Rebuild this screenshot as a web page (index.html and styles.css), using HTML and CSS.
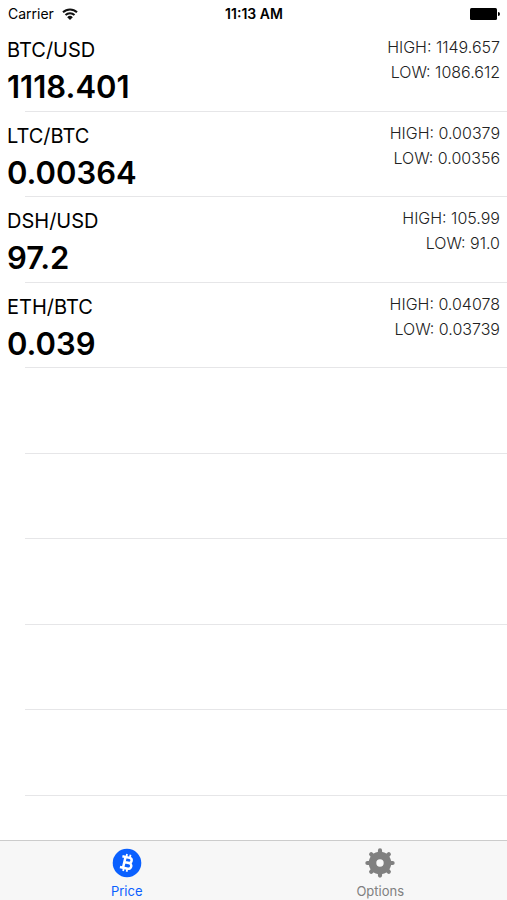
FILE: index.html
```html
<!DOCTYPE html>
<html lang="en">
<head>
	<meta charset="UTF-8">
	<meta name="viewport" content="width=device-width, initial-scale=1">
	<title>Price</title>
	<link rel="stylesheet" href="styles.css">
</head>
<body>

<header class="status">
	<div class="carrier">
		<span>Carrier</span>
		<svg class="wifi" viewBox="0 0 16 12" aria-hidden="true">
			<path d="M1 4.3a10 10 0 0 1 14 0M3.5 7a6.4 6.4 0 0 1 9 0"/>
			<path class="dot" d="M8 12 5.2 9.2a4 4 0 0 1 5.6 0z"/>
		</svg>
	</div>
	<time class="time">11:13 AM</time>
	<svg class="battery" viewBox="0 0 31 12" aria-hidden="true">
		<rect x="1" width="27" height="12" rx="1.5"/>
		<path d="M29 4a2 2 0 0 1 0 4z"/>
	</svg>
</header>

<main>
	<ul class="list">
		<li class="row">
			<div>
				<h2 class="pair">BTC/USD</h2>
				<p class="price">1118.401</p>
			</div>
			<div class="range">
				<p>HIGH: 1149.657</p>
				<p>LOW: 1086.612</p>
			</div>
		</li>
		<li class="row">
			<div>
				<h2 class="pair">LTC/BTC</h2>
				<p class="price">0.00364</p>
			</div>
			<div class="range">
				<p>HIGH: 0.00379</p>
				<p>LOW: 0.00356</p>
			</div>
		</li>
		<li class="row">
			<div>
				<h2 class="pair">DSH/USD</h2>
				<p class="price">97.2</p>
			</div>
			<div class="range">
				<p>HIGH: 105.99</p>
				<p>LOW: 91.0</p>
			</div>
		</li>
		<li class="row">
			<div>
				<h2 class="pair">ETH/BTC</h2>
				<p class="price">0.039</p>
			</div>
			<div class="range">
				<p>HIGH: 0.04078</p>
				<p>LOW: 0.03739</p>
			</div>
		</li>
		<!-- empty rows -->
		<li class="row"></li>
		<li class="row"></li>
		<li class="row"></li>
		<li class="row"></li>
		<li class="row"></li>
	</ul>
</main>

<nav class="tabs">
	<a class="tab active" href="#price" aria-current="page">
		<svg class="icon" viewBox="0 0 30 30" aria-hidden="true">
			<circle cx="15" cy="15" r="14.3" fill="currentColor"/>
			<g transform="rotate(13 15 15)" fill="none" stroke="#fff" stroke-width="2.5">
				<path d="M9 9.4h7.4a2.6 2.6 0 0 1 0 5.2h-4M12.2 14.6h4.8a2.9 2.9 0 0 1 0 5.8H9M12.2 9.4v11"/>
				<path d="M13 6.2v3M16.6 6.2v3M13 20.6v3M16.6 20.6v3" stroke-width="1.8"/>
			</g>
		</svg>
		<span>Price</span>
	</a>
	<a class="tab" href="#options">
		<svg class="icon" viewBox="0 0 30 30" aria-hidden="true">
			<g fill="none" stroke="currentColor">
				<circle cx="15" cy="15" r="7.5" stroke-width="7.6"/>
				<path d="M15 2.4v4M15 23.6v4M2.4 15h4M23.6 15h4M6.2 6.2l3 3M20.8 20.8l3 3M23.8 6.2l-3 3M9.2 20.8l-3 3" stroke-width="4.2" stroke-linecap="round"/>
			</g>
		</svg>
		<span>Options</span>
	</a>
</nav>

</body>
</html>
```
FILE: styles.css
```css
* {box-sizing: border-box;}

body {
	display: flex;
	flex-direction: column;
	min-height: 100vh;
	margin: 0;
	background: #fff;
	color: #000;
	font: normal 400 16px/25px Inter, "Liberation Sans", sans-serif;}

h2, p, ul {
	margin: 0;
	padding: 0;}

/* status bar */
.status {
	display: grid;
	grid-template-columns: 1fr auto 1fr;
	align-items: center;
	height: 26px;
	padding: 2px 7px 0 8px;
	font-size: 14px;
	line-height: 24px;}

.carrier {
	display: flex;
	align-items: center;
	gap: 8px;}

.wifi {
	width: 16px;
	height: 12px;
	fill: none;
	stroke: #111;
	stroke-width: 2;}
.wifi .dot {fill: #111; stroke: none;}

.time {font-weight: 600;}

.battery {
	width: 31px;
	height: 12px;
	justify-self: end;}

/* price list */
main {
	display: flex;
	flex: 1;}

.list {
	display: grid;
	flex: 1;
	grid-template-rows: repeat(9, minmax(85px, 1fr));
	padding-bottom: 44px;
	list-style: none;}

.row {
	display: flex;
	justify-content: space-between;
	padding: 9px 7px 0;
	background: linear-gradient(#e6e6e8, #e6e6e8) 25px 100% / 100% 1px no-repeat;}

.pair {
	font-size: 20px;
	font-weight: 400;
	line-height: 30px;}

.price {
	font-size: 31px;
	font-weight: 600;
	line-height: 43px;}

.range {
	color: #222;
	font-weight: 300;
	text-align: right;}

/* tab bar */
.tabs {
	display: flex;
	height: 60px;
	border-top: 1px solid #ccc;
	background: #f7f7f7;}

.tab {
	display: flex;
	flex: 1;
	flex-direction: column;
	align-items: center;
	gap: 5px;
	padding-top: 7px;
	color: #808080;
	font-size: 13px;
	line-height: 16px;
	text-decoration: none;}
.tab.active {color: #0a60ff;}

.icon {
	width: 30px;
	height: 30px;}
```
